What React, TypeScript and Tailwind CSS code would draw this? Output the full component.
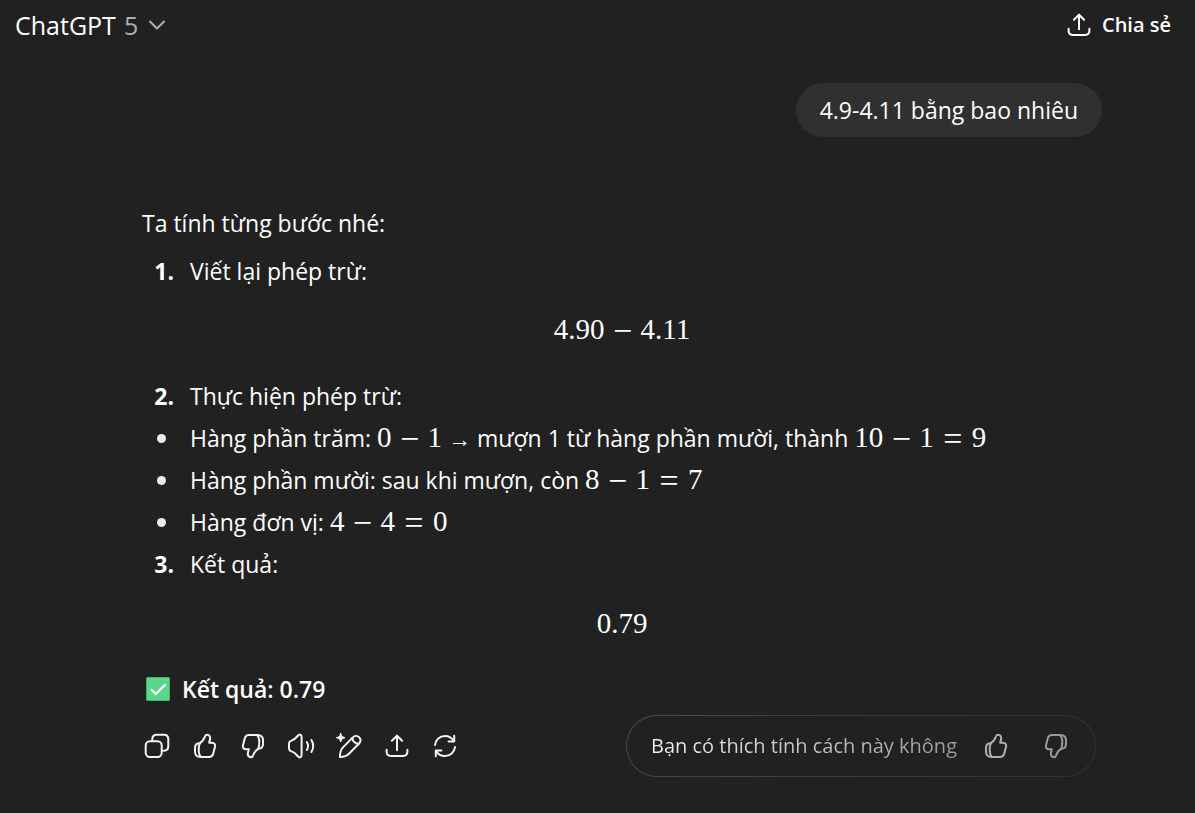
import type { ReactNode } from "react";

type IconProps = { className?: string };

function Icon({ children, className = "" }: IconProps & { children: ReactNode }) {
  return (
    <svg
      viewBox="0 0 30 30"
      fill="none"
      stroke="currentColor"
      strokeWidth="2"
      strokeLinecap="round"
      strokeLinejoin="round"
      aria-hidden="true"
      className={`size-[30px] shrink-0 ${className}`}
    >
      {children}
    </svg>
  );
}

const CopyIcon = () => (
  <Icon>
    <rect x="3.7" y="10.2" width="16" height="15.8" rx="4.2" />
    <path d="M10.3 10V8.2C10.3 5.3 11.8 3.7 14.7 3.7H22C24.9 3.7 26.3 5.3 26.3 8.2V15.3C26.3 18.2 24.9 19.7 22 19.7H20" />
  </Icon>
);

const thumbOutline =
  "M9.5 12.3C12 11 13.8 8.5 14.9 5.6C15.3 4.3 16 3.6 17.2 3.8C19.3 4 20.6 5.6 20.1 7.8L19.2 11.7H22C24.3 11.7 25.6 13.6 25 15.8L23.2 22.8C22.6 25 21.2 26 19 26H10.5C7 26 5 24 5 20.5V17C5 14 6.5 12.3 9.5 12.3Z";
const thumbCuff = "M9.9 12.3C8.8 14 8.7 16 8.7 18.8C8.7 22 9.2 24.5 11.2 26";

const ThumbUpIcon = () => (
  <Icon>
    <path d={thumbOutline} />
    <path d={thumbCuff} />
  </Icon>
);

const ThumbDownIcon = () => (
  <Icon className="rotate-180">
    <path d={thumbOutline} />
    <path d={thumbCuff} />
  </Icon>
);

const SpeakerIcon = () => (
  <Icon>
    <path d="M3 12.5C3 11 3.6 10.4 5 9.9C8 9 9.8 7.2 11.6 5C13.4 2.8 15.6 3.3 15.6 6V24C15.6 26.7 13.4 27.2 11.6 25C9.8 22.8 8 21 5 20.1C3.6 19.6 3 19 3 17.5Z" />
    <path d="M20.8 11C22.4 13.5 22.4 16.5 20.8 19" />
    <path d="M25.4 9C27.5 12.5 27.5 17.5 25.4 21" />
  </Icon>
);

const PencilIcon = () => (
  <Icon>
    <path d="M5.9 26C5.9 22 6.2 19.2 9 16.4L18.6 6.6C20.7 4.5 23.4 4.5 25.1 6.2C26.9 8 26.9 10.6 24.8 12.7L15.2 22.5C12.4 25.3 9.6 26 5.9 26Z" />
    <path d="M18.4 6.9C18.6 10 21 12.6 24.6 12.8" />
    <path
      d="M6.7 2.4L7.9 5.5L11 6.7L7.9 7.9L6.7 11L5.5 7.9L2.4 6.7L5.5 5.5Z"
      fill="currentColor"
      strokeWidth="1"
    />
  </Icon>
);

const UploadIcon = () => (
  <Icon>
    <path d="M15 19.3V4.8" />
    <path d="M9.9 9.8L15 4.7L20.1 9.8" />
    <path d="M4.6 18.8V20.5C4.6 23.4 6 24.9 8.9 24.9H21.1C24 24.9 25.4 23.4 25.4 20.5V18.8" />
  </Icon>
);

const RefreshIcon = () => (
  <Icon>
    <path d="M5 14C5.6 8.7 9.8 4.9 15 4.9C18.8 4.9 22 6.9 23.8 10" />
    <path d="M24.2 4.8V10.5H18.6" />
    <path d="M25 16C24.4 21.3 20.2 25.1 15 25.1C11.2 25.1 8 23.1 6.2 20" />
    <path d="M5.8 25.2V19.5H11.4" />
  </Icon>
);

const CheckBadge = () => (
  <svg viewBox="0 0 24 24" role="img" aria-label="Đúng" className="ml-1 size-6 shrink-0">
    <rect width="24" height="24" rx="1.5" fill="#3fb56f" />
    <rect x="1" y="1" width="22" height="22" rx="1" fill="#5bd68d" />
    <path d="M5 12.2L9.8 17L19.6 7.2" fill="none" stroke="#fff" strokeWidth="2.2" />
  </svg>
);

const Minus = () => <span className="inline-block w-9 text-center align-[-3px] text-[34px] leading-none">−</span>;
const Equals = () => <span className="inline-block w-[38px] text-center align-[-3px] text-[34px] leading-none">=</span>;

function Math({ children }: { children: ReactNode }) {
  return (
    <span className="font-['Liberation_Serif',serif] text-[29px] leading-none whitespace-nowrap">{children}</span>
  );
}

function Formula({ children }: { children: ReactNode }) {
  return <div className="mt-[17px] mb-[23px] flex h-[43px] items-center justify-center">{children}</div>;
}

function Row({ marker, children }: { marker?: string; children: ReactNode }) {
  return (
    <li className="flex h-[42px] items-center">
      {marker ? (
        <span className="w-12 pr-4 text-right font-bold">{marker}</span>
      ) : (
        <span className="w-12 pl-[15px]">
          <span className="block size-[9px] rounded-full bg-[#ececec]" />
        </span>
      )}
      <span>{children}</span>
    </li>
  );
}

const actions = [
  { label: "Sao chép", icon: <CopyIcon /> },
  { label: "Phản hồi tốt", icon: <ThumbUpIcon /> },
  { label: "Phản hồi kém", icon: <ThumbDownIcon /> },
  { label: "Đọc to", icon: <SpeakerIcon /> },
  { label: "Chỉnh sửa trong canvas", icon: <PencilIcon /> },
  { label: "Chia sẻ câu trả lời", icon: <UploadIcon /> },
  { label: "Thử lại", icon: <RefreshIcon /> },
];

export default function App() {
  return (
    <div className="min-h-screen bg-[#212121] font-['Open_Sans','Noto_Sans',sans-serif] text-[23px] leading-[42px] text-white">
      <header className="flex h-[50px] items-center justify-between pr-6 pl-[15px]">
        <button type="button" className="flex items-center text-[25px]">
          ChatGPT
          <span className="ml-2 text-[#afafaf]">5</span>
          <svg
            viewBox="0 0 18 18"
            fill="none"
            stroke="#afafaf"
            strokeWidth="2"
            strokeLinecap="round"
            strokeLinejoin="round"
            aria-hidden="true"
            className="ml-2.5 size-[18px]"
          >
            <path d="M2 5.5L9 12.5L16 5.5" />
          </svg>
        </button>
        <button type="button" className="flex items-center gap-2 text-[20px] font-semibold">
          <UploadIcon />
          Chia sẻ
        </button>
      </header>

      <main className="pr-[93px] pl-[142px]">
        <div className="flex justify-end pt-[33px]">
          <p className="flex h-[54px] items-center rounded-full bg-[#303030] px-6">4.9-4.11 bằng bao nhiêu</p>
        </div>

        <article className="pt-[65px]">
          <p>Ta tính từng bước nhé:</p>
          <ol className="mt-1.5">
            <Row marker="1.">Viết lại phép trừ:</Row>
          </ol>
          <Formula>
            <Math>
              4.90
              <Minus />
              4.11
            </Math>
          </Formula>
          <ol>
            <Row marker="2.">Thực hiện phép trừ:</Row>
            <Row>
              Hàng phần trăm:{" "}
              <Math>
                0<Minus />1
              </Math>{" "}
              → mượn 1 từ hàng phần mười, thành{" "}
              <Math>
                10
                <Minus />1<Equals />9
              </Math>
            </Row>
            <Row>
              Hàng phần mười: sau khi mượn, còn{" "}
              <Math>
                8<Minus />1<Equals />7
              </Math>
            </Row>
            <Row>
              Hàng đơn vị:{" "}
              <Math>
                4<Minus />4<Equals />0
              </Math>
            </Row>
            <Row marker="3.">Kết quả:</Row>
          </ol>
          <Formula>
            <Math>0.79</Math>
          </Formula>
          <p className="flex items-center gap-3 font-semibold">
            <CheckBadge />
            Kết quả: 0.79
          </p>
        </article>

        <div className="mt-[5px] -ml-[9px] flex items-center justify-between pr-1.5">
          <div className="flex text-[#f3f3f3]">
            {actions.map((action) => (
              <button
                key={action.label}
                type="button"
                aria-label={action.label}
                className="flex size-12 items-center justify-center"
              >
                {action.icon}
              </button>
            ))}
          </div>
          <div className="rounded-full bg-linear-to-r from-[#484848] to-[#303030] p-px">
            <div className="flex h-[60px] items-center rounded-full bg-[#212121] pr-[15px] pl-6 text-[#afafaf]">
              <span className="bg-linear-to-r from-[#f3f3f3] to-[#9b9b9b] bg-clip-text text-[20px] text-transparent">
                Bạn có thích tính cách này không
              </span>
              <button type="button" aria-label="Thích" className="ml-[15px] flex size-12 items-center justify-center">
                <ThumbUpIcon />
              </button>
              <button
                type="button"
                aria-label="Không thích"
                className="ml-3 flex size-12 items-center justify-center text-[#9b9b9b]"
              >
                <ThumbDownIcon />
              </button>
            </div>
          </div>
        </div>
      </main>
    </div>
  );
}
